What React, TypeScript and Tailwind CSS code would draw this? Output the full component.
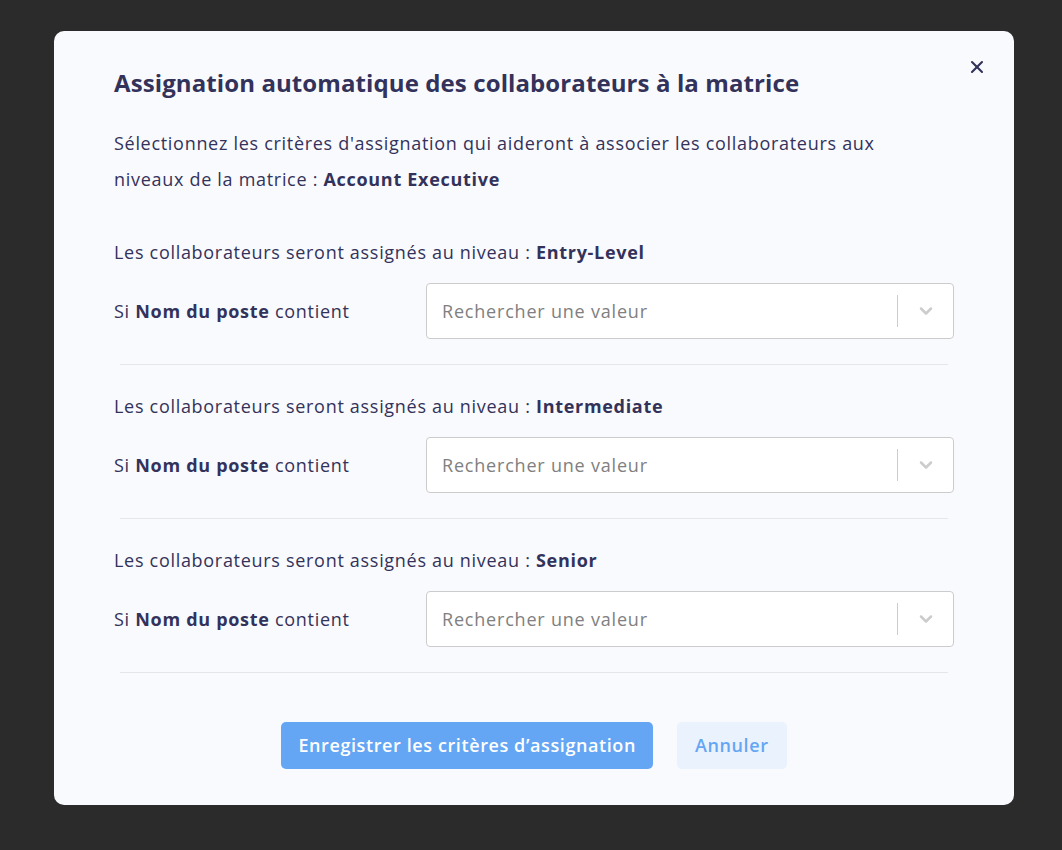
import { X, ChevronDown } from "lucide-react";

const levels = ["Entry-Level", "Intermediate", "Senior"];

function Criteria({ level }: { level: string }) {
  return (
    <div>
      <p className="text-[18px] leading-[36px] tracking-[0.7px]">
        Les collaborateurs seront assignés au niveau : <span className="font-bold">{level}</span>
      </p>
      <div className="flex items-center mt-[13px]">
        <div className="w-[312px] text-[18px] tracking-[0.7px]">
          Si <span className="font-bold">Nom du poste</span> contient
        </div>
        <div className="flex-1 h-[56px] bg-white border border-[#cccccc] rounded-[4px] flex items-center">
          <span className="flex-1 pl-[15px] text-[18px] tracking-[0.8px] text-[#808080]">Rechercher une valeur</span>
          <span className="w-px h-[32px] bg-[#cccccc]" />
          <span className="w-[55px] flex justify-center text-[#cccccc]">
            <ChevronDown size={20} strokeWidth={3} />
          </span>
        </div>
      </div>
      <div className="h-px bg-[#e6e6ea] mx-[6px] mt-[25px]" />
    </div>
  );
}

export default function App() {
  return (
    <div className="min-h-screen bg-[#2b2b2b] flex pl-[54px] pt-[31px] font-['Open_Sans',sans-serif] text-[#33325a]">
      <div className="relative w-[960px] h-[774px] bg-[#f9fafd] rounded-[10px] px-[60px] pt-[35px]">
        <button className="absolute right-[27px] top-[26px] text-[#33325a]">
          <X size={20} strokeWidth={2.5} />
        </button>
        <h1 className="text-[24px] font-bold leading-[34px] tracking-[0.1px]">
          Assignation automatique des collaborateurs à la matrice
        </h1>
        <p className="text-[18px] leading-[36px] mt-[25px] pr-[40px] tracking-[0.7px]">
          Sélectionnez les critères d'assignation qui aideront à associer les collaborateurs aux niveaux de la matrice :{" "}
          <span className="font-bold">Account Executive</span>
        </p>
        <div className="mt-[37px] flex flex-col gap-[23px]">
          {levels.map((l) => (
            <Criteria key={l} level={l} />
          ))}
        </div>
        <div className="flex justify-center gap-[24px] mt-[49px]">
          <button className="h-[47px] px-[17px] rounded-[5px] bg-[#64a6f4] text-white text-[18px] font-semibold tracking-[0.6px]">
            Enregistrer les critères d’assignation
          </button>
          <button className="h-[47px] px-[18px] rounded-[5px] bg-[#eaf2fd] text-[#64a6f4] text-[18px] font-semibold tracking-[0.6px]">
            Annuler
          </button>
        </div>
      </div>
    </div>
  );
}
